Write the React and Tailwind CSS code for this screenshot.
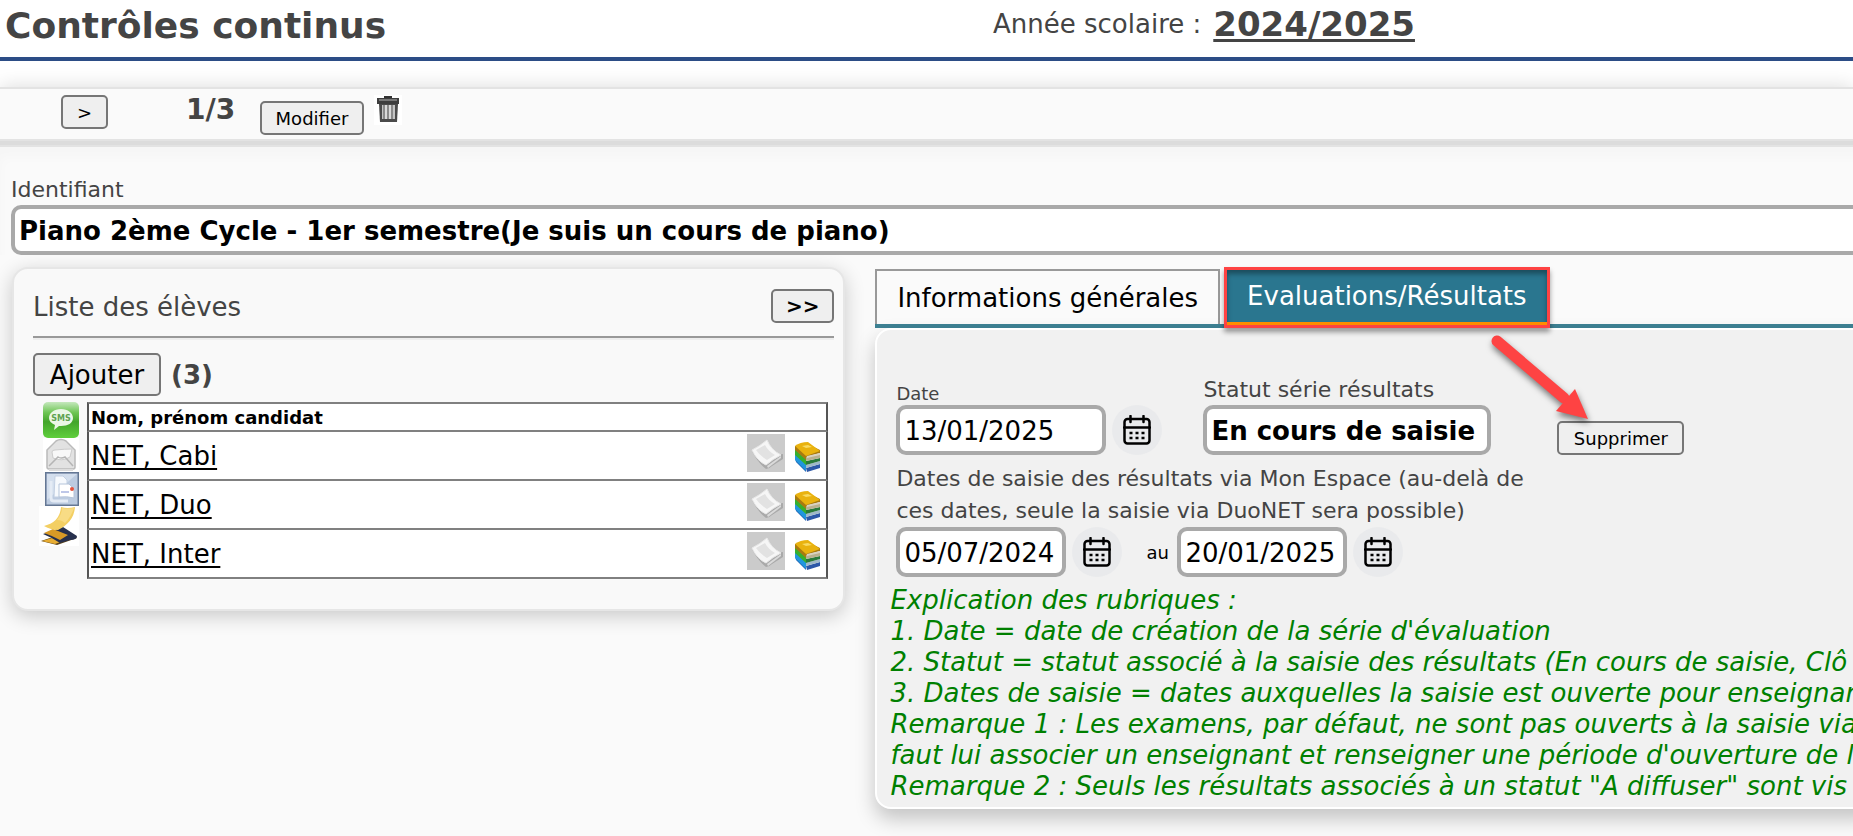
import React, { useState } from 'react';

const STUDENTS = ['NET, Cabi', 'NET, Duo', 'NET, Inter'];

const NOTES = [
  'Explication des rubriques :',
  "1. Date = date de création de la série d'évaluation",
  '2. Statut = statut associé à la saisie des résultats (En cours de saisie, Clô',
  '3. Dates de saisie = dates auxquelles la saisie est ouverte pour enseignan',
  'Remarque 1 : Les examens, par défaut, ne sont pas ouverts à la saisie via',
  "faut lui associer un enseignant et renseigner une période d'ouverture de l",
  'Remarque 2 : Seuls les résultats associés à un statut "A diffuser" sont vis',
];

const fieldClass = 'h-[50px] rounded-[10px] border-4 border-[#a9a9a9] bg-white text-[26px] text-black outline-none';
const buttonClass = 'flex items-center justify-center rounded-[5px] border-2 border-[#767676] bg-[#efefef] text-black';

function TrashIcon() {
  return (
    <svg width="28" height="30" viewBox="0 0 28 30" aria-hidden="true">
      <rect width="28" height="30" fill="#fff" />
      <path d="M10 1h8v3h-8z" fill="#333" />
      <path d="M3 3h22v6H3z" fill="#3d3d3d" />
      <path d="M5 4h18v2H5z" fill="#777" />
      <path d="M5 9h19l-1 18H6z" fill="#4a4a4a" />
      <path d="M8 10h13v14H8z" fill="#c4c4c4" />
      <path d="M10 10v14M14 10v14M18 10v14" stroke="#777" strokeWidth="1.5" />
      <path d="M12 10v14M16 10v14" stroke="#eee" strokeWidth="1" />
    </svg>
  );
}

function SmsIcon() {
  return (
    <svg width="36" height="36" viewBox="0 0 36 36" aria-hidden="true">
      <defs>
        <linearGradient id="sms" x1="0" y1="0" x2="0" y2="1">
          <stop offset="0" stopColor="#c5e8bd" />
          <stop offset="0.3" stopColor="#6cc552" />
          <stop offset="0.55" stopColor="#43a52b" />
          <stop offset="1" stopColor="#5fcf3c" />
        </linearGradient>
      </defs>
      <rect width="36" height="36" rx="5" fill="url(#sms)" />
      <path d="M18 7c7 0 12 4 12 9s-5 8-12 8l-2 0-5 4 1-5c-4-2-6-4-6-7 0-5 5-9 12-9z" fill="#eaf7e6" />
      <text x="18" y="19" textAnchor="middle" fontSize="8" fontWeight="700" fill="#5ea350">SMS</text>
    </svg>
  );
}

function EnvelopeIcon() {
  return (
    <svg width="36" height="34" viewBox="0 0 36 34" aria-hidden="true">
      <rect width="36" height="34" fill="#fff" />
      <path d="M4 12 13 3q5-3 10 0l9 9v17q0 2-2 2H6q-2 0-2-2z" fill="#e2e2e2" stroke="#bbb" strokeWidth="1.5" />
      <path d="M9 14q0-2 3-2 10-1 17-1l-2 8q-8 5-17 1z" fill="#f8f8f8" stroke="#ccc" />
      <path d="m6 28 9-9q3 2 7 0l8 9" fill="none" stroke="#b5b5b5" strokeWidth="1.5" />
      <path d="M6 32h24" stroke="#ddd" strokeWidth="2" />
    </svg>
  );
}

function DocumentsIcon() {
  return (
    <svg width="34" height="34" viewBox="0 0 34 34" aria-hidden="true">
      <rect x="0.75" y="0.75" width="32.5" height="32.5" fill="#bccbe0" stroke="#647794" strokeWidth="1.5" />
      <path d="M2 2h30L2 28z" fill="#d3deed" />
      <path d="M6 9v17q0 3 3 3h14" fill="none" stroke="#e4ebf5" strokeWidth="3" />
      <path d="M10 4h8l4 4v17H9z" fill="#f6f9fd" stroke="#c3d0e3" />
      <path d="M14 12h10l5 5v9q-7-2-15-1z" fill="#fff" stroke="#b5c4da" />
      <path d="M16 20h8" stroke="#a9b4e0" strokeWidth="1.5" />
      <circle cx="27" cy="17" r="2" fill="#e5533d" />
    </svg>
  );
}

function StackIcon() {
  return (
    <svg width="40" height="40" viewBox="0 0 40 40" aria-hidden="true">
      <rect width="40" height="40" fill="#fff" />
      <path d="m2 35 9-3 24-3 3 3-20 7z" fill="#5b4218" />
      <path d="m3 35 10-3 14 2-11 4z" fill="#e8ad33" />
      <path d="m4 28 20-7 14 9q0 4-7 4l-10 3q-7-5-17-9z" fill="#27304d" />
      <path d="m5 27 9-4 15 6-8 5q-7-4-16-7z" fill="#d99a26" />
      <path d="M5 20q16-4 17-19 6 2 14 0-1 15-17 23-7 0-14-4z" fill="#f3cf63" />
      <path d="M23 2q6 1 12 0-3 9-9 15-3-3-8-3 5-6 5-12z" fill="#f8dc85" />
    </svg>
  );
}

function PaperIcon() {
  return (
    <svg width="38" height="38" viewBox="0 0 38 38" aria-hidden="true">
      <rect width="38" height="38" fill="#cbcbcb" />
      <path d="M5 17q6 12 14 18 3 0 6-3l11-7v-5l-16 2z" fill="#a9a9a9" />
      <path d="M5 16q5 11 14 15 7-6 15-10Q24 16 20 6q-7 6-15 10z" fill="#f6f6f6" stroke="#e8e8e8" />
      <path d="m9 16 9-5q3 6 10 10l-8 5q-7-4-11-10z" fill="#e2e2e2" />
      <path d="m20 32 14-10v2l-13 10z" fill="#dadada" />
    </svg>
  );
}

function BooksIcon() {
  return (
    <svg width="28" height="32" viewBox="0 0 28 32" aria-hidden="true">
      <path d="m1 17 11 10v4L2 21z" fill="#1d5fb0" />
      <path d="m1 12 11 11v7L1 19z" fill="#2196dd" />
      <path d="m1 8 11 10v6L1 14z" fill="#37b02c" />
      <path d="m12 27 14-4v4l-13 4z" fill="#2d58a8" />
      <path d="m12 24 14-4v3l-14 4z" fill="#9fb8c8" />
      <path d="m12 20 14-3v3l-14 4z" fill="#2a7a3a" />
      <path d="m12 16 14-3v4l-14 3z" fill="#b9b08f" />
      <path d="m1 5 11-3 14 7v3l-14 4v3L1 9z" fill="#a87a10" />
      <path d="M1 5q5-4 13-4l12 9-14 5z" fill="#e9b20e" />
      <path d="m8 5 6-1 4 2-6 1z" fill="#f8da62" />
      <path d="m13 15 13-3v2l-13 3z" fill="#d8d2c2" />
    </svg>
  );
}

function CalendarButton({ label }) {
  return (
    <button aria-label={label} className="flex size-[50px] shrink-0 items-center justify-center rounded-full bg-[#e9eaec]">
      <svg width="28" height="30" viewBox="0 0 28 30" fill="none" stroke="#000" aria-hidden="true">
        <rect x="1.5" y="4" width="25" height="24.5" rx="3" strokeWidth="2.5" />
        <path d="M1 12.500h26M7.500 1v6M20.500 1v6" strokeWidth="2.5" strokeLinecap="round" />
        <path d="M6.500 18h3M12.500 18h3M18.500 18h3M6.500 23h3M12.500 23h3M18.500 23h3" strokeWidth="2.5" />
      </svg>
    </button>
  );
}

function Arrow() {
  return (
    <svg className="absolute left-[609px] top-[3px] drop-shadow-[1px_4px_3px_rgba(0,0,0,0.5)]" width="104" height="90" viewBox="0 0 104 90" aria-hidden="true">
      <path d="M11 8 78 65" stroke="#fe4343" strokeWidth="11" strokeLinecap="round" />
      <path d="m102 86-32-8 19-22z" fill="#fe4343" />
    </svg>
  );
}

function StudentList() {
  return (
    <section className="rounded-2xl border-2 border-[#e6e6e6] bg-[#f9f9f9] px-[19px] pb-[30px] pt-5 shadow-[0_5px_20px_rgba(0,0,0,0.2)]">
      <div className="mr-[-10px] flex h-[34px] items-center justify-between">
        <h2 className="pt-[2px] text-[26px] leading-[34px]">Liste des élèves</h2>
        <button className={`${buttonClass} h-[34px] w-[63px] text-[20px] font-bold`}>&gt;&gt;</button>
      </div>
      <hr className="mr-[-10px] mt-[13px] h-1 border-0 border-b-2 border-t-2 border-b-[#eee] border-t-[#999]" />
      <div className="mt-[13px] flex h-[43px] items-center gap-[10px]">
        <button className={`${buttonClass} h-[43px] w-[128px] pt-[2px] text-[26px]`}>Ajouter</button>
        <strong className="pt-[2px] text-[26px]">(3)</strong>
      </div>
      <div className="mr-[-4px] mt-[6px] flex">
        <div className="flex w-[54px] flex-col items-end pr-2">
          <button aria-label="Envoyer un SMS"><SmsIcon /></button>
          <button aria-label="Envoyer un e-mail"><EnvelopeIcon /></button>
          <button aria-label="Documents"><DocumentsIcon /></button>
          <button aria-label="Publipostage"><StackIcon /></button>
        </div>
        <table className="flex-1 border-collapse bg-white text-black">
          <thead className="block">
            <tr className="flex h-[30px] items-center border-2 border-[#808080] border-x-[#555]">
              <th className="px-[2px] text-left text-[18px] font-bold">Nom, prénom candidat</th>
            </tr>
          </thead>
          <tbody className="block">
            {STUDENTS.map((name) => (
              <tr key={name} className="flex h-[49px] justify-between border-2 border-t-0 border-[#808080] border-x-[#555]">
                <td className="px-[2px] pt-[7px]">
                  <a href="#" className="text-[26px] leading-[34px] underline underline-offset-[3px]">{name}</a>
                </td>
                <td className="flex items-start gap-[9px] pr-1 pt-[2px]">
                  <button aria-label={`Bulletin ${name}`}><PaperIcon /></button>
                  <button aria-label={`Cours ${name}`} className="pt-[7px]"><BooksIcon /></button>
                </td>
              </tr>
            ))}
          </tbody>
        </table>
      </div>
    </section>
  );
}

function ResultsPanel() {
  const [date, setDate] = useState('13/01/2025');
  const [from, setFrom] = useState('05/07/2024');
  const [to, setTo] = useState('20/01/2025');

  return (
    <section className="relative -mr-6 rounded-2xl border-2 border-white bg-[#f1f1f1] pb-[5px] pl-[19px] pt-[45px] shadow-[0_10px_20px_rgba(0,0,0,0.22)]">
      <Arrow />
      <div className="flex h-20 items-end">
        <div className="w-[210px]">
          <label htmlFor="date" className="block text-[18px] leading-[22px]">Date</label>
          <input id="date" value={date} onChange={(e) => setDate(e.target.value)} className={`${fieldClass} block w-full px-1 pt-[2px]`} />
        </div>
        <div className="ml-[6px]"><CalendarButton label="Choisir la date" /></div>
        <div className="ml-[41px] w-[288px]">
          <label htmlFor="statut" className="block text-[22px] leading-[30px]">Statut série résultats</label>
          <select id="statut" className={`${fieldClass} block w-full appearance-none px-1 pt-[2px] font-bold`}>
            <option>En cours de saisie</option>
          </select>
        </div>
        <button className={`${buttonClass} ml-[66px] h-[34px] w-[127px] text-[18px]`}>Supprimer</button>
      </div>
      <p className="mt-2 w-[660px] text-[22px] leading-8">
        Dates de saisie des résultats via Mon Espace (au-delà de ces dates, seule la saisie via DuoNET sera possible)
      </p>
      <div className="flex items-center">
        <input aria-label="Date de début" value={from} onChange={(e) => setFrom(e.target.value)} className={`${fieldClass} w-[170px] px-1 pt-[2px]`} />
        <div className="ml-[6px]"><CalendarButton label="Choisir la date de début" /></div>
        <label htmlFor="fin" className="mx-3 w-[31px] pl-3 text-[18px] text-black">au</label>
        <input id="fin" value={to} onChange={(e) => setTo(e.target.value)} className={`${fieldClass} w-[170px] px-1 pt-[2px]`} />
        <div className="ml-[6px]"><CalendarButton label="Choisir la date de fin" /></div>
      </div>
      <div className="-ml-[6px] mt-2 whitespace-nowrap text-[26px] italic leading-[31px] text-[#008000]">
        {NOTES.map((line) => (
          <p key={line}>{line}</p>
        ))}
      </div>
    </section>
  );
}

export default function App() {
  return (
    <div className="min-h-screen overflow-hidden bg-[#fafafa] font-['DejaVu_Sans',Verdana,sans-serif] text-[#444]">
      <header className="flex h-[61px] items-start border-b-4 border-[#2c4d86] bg-white pl-[5px]">
        <h1 className="w-[988px] text-[36px] font-bold leading-[52px]">Contrôles continus</h1>
        <div className="flex items-start gap-3 leading-[48px]">
          <span className="text-[26px]">Année scolaire :</span>
          <a href="#" className="text-[34px] font-bold underline decoration-[3px] underline-offset-[3px]">2024/2025</a>
        </div>
      </header>

      <div className="bg-white pt-[26px]">
        <nav className="flex h-[54px] items-start border-y-2 border-[#e3e3e3] bg-[#fafafa] pl-[61px] pt-[6px] shadow-[0_0_20px_rgba(0,0,0,0.15)]">
          <button aria-label="Suivant" className={`${buttonClass} h-[34px] w-[47px] text-[18px]`}>&gt;</button>
          <strong className="ml-[78px] w-[74px] text-[28px] leading-[30px]">1/3</strong>
          <button className={`${buttonClass} mt-[6px] h-[34px] w-[104px] text-[18px]`}>Modifier</button>
          <button aria-label="Supprimer la fiche" className="ml-[10px]"><TrashIcon /></button>
        </nav>
      </div>

      <main className="relative border-t-4 border-[#dcdcdc] bg-[#fafafa]">
        <div className="-mr-4 border-t-2 border-[#e3e3e3] pl-[11px] pt-[27px] shadow-[inset_0_10px_12px_rgba(0,0,0,0.02)]">
          <label htmlFor="identifiant" className="block text-[22px] leading-[31px]">Identifiant</label>
          <input
            id="identifiant"
            defaultValue="Piano 2ème Cycle - 1er semestre(Je suis un cours de piano)"
            className={`${fieldClass} block w-full px-1 pt-[2px] font-bold`}
          />
        </div>

        <div className="flex items-start pb-4 pt-3">
          <div className="w-[46%] shrink-0 pl-3 pr-[7px]">
            <StudentList />
          </div>
          <div className="min-w-0 flex-1 pl-[23px]">
            <div role="tablist" className="flex h-[61px] items-end border-b-4 border-[#3e8294] text-[26px]">
              <button role="tab" className="h-[55px] shrink-0 border-2 border-b-0 border-[#999] bg-[#fafafa] px-5 pt-[2px] text-black">
                Informations générales
              </button>
              <button
                role="tab"
                aria-selected="true"
                className="z-10 -mb-1 ml-1 h-[61px] shrink-0 border-[3px] border-[#fe4343] bg-[#2a768f] px-5 pb-[2px] text-white shadow-[0_4px_5px_rgba(0,0,0,0.4),inset_0_-3px_0_#ff8c00,inset_0_4px_5px_rgba(0,0,0,0.35)]"
              >
                Evaluations/Résultats
              </button>
            </div>
            <ResultsPanel />
          </div>
        </div>
      </main>
    </div>
  );
}
